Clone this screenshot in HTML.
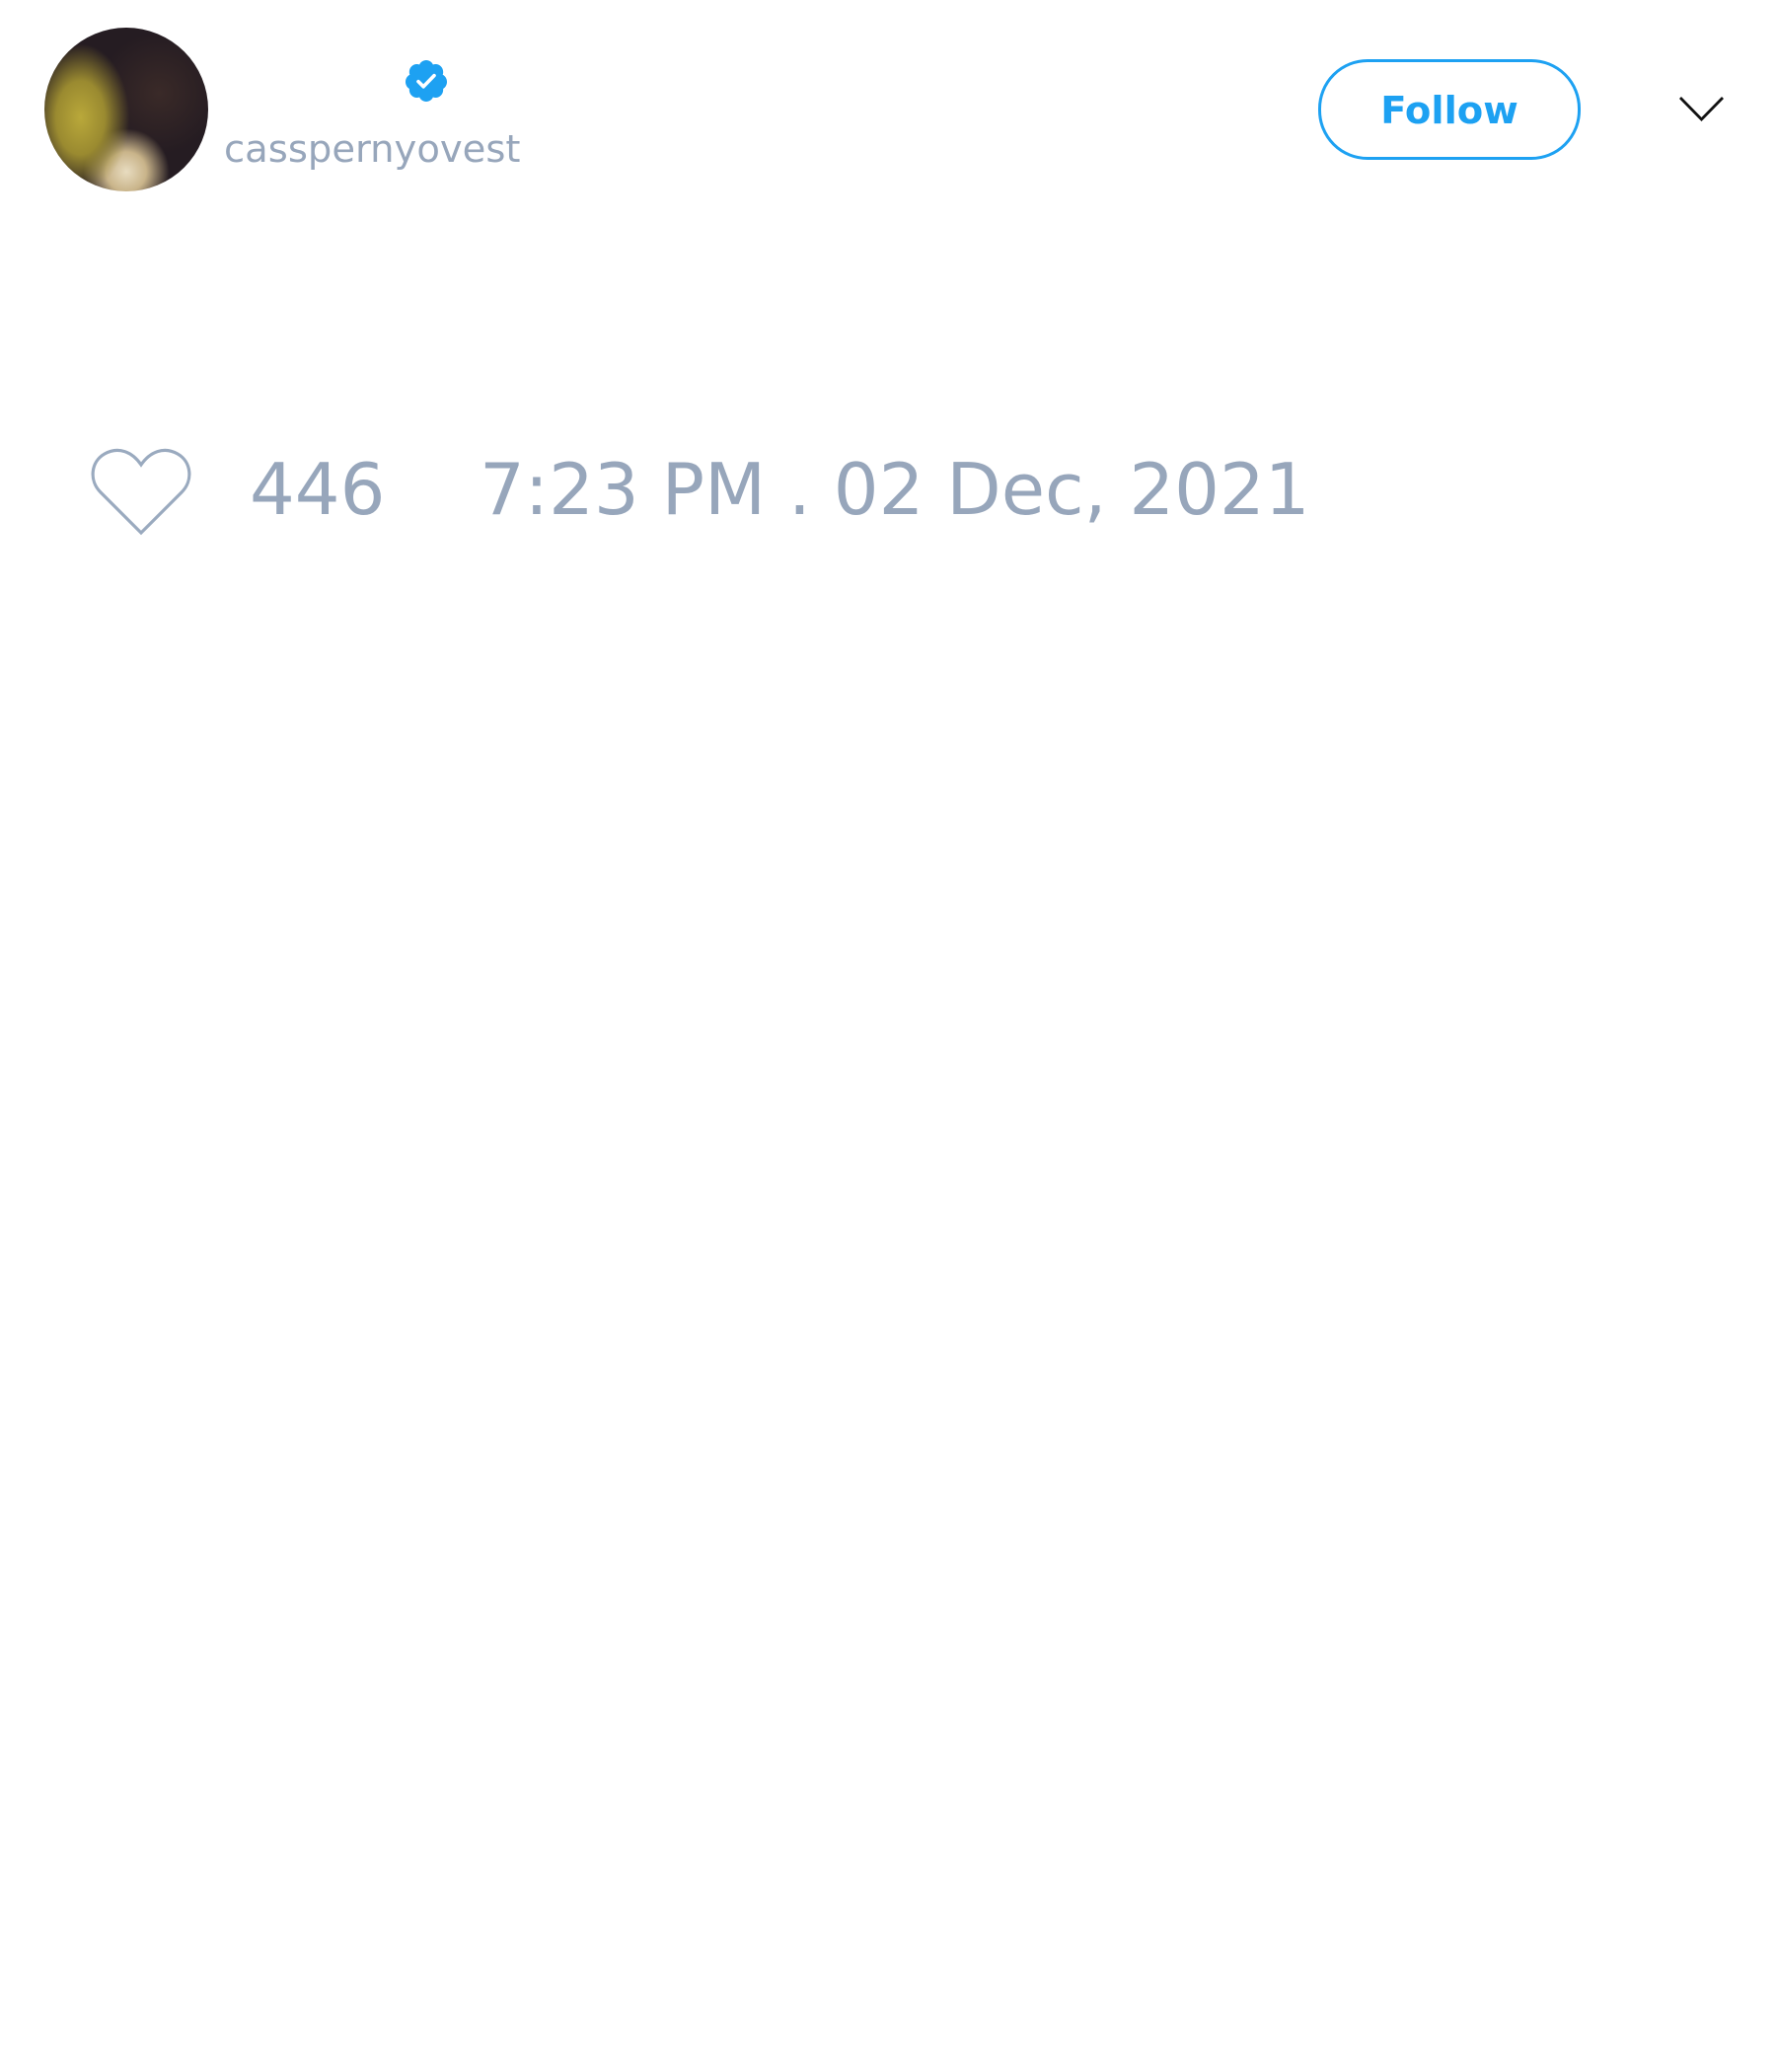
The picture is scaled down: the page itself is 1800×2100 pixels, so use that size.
<!DOCTYPE html>
<html><head><meta charset="utf-8"><style>
html,body{margin:0;padding:0;background:#fff;width:1800px;height:2100px;overflow:hidden;font-family:"DejaVu Sans","Liberation Sans",sans-serif}
.abs{position:absolute}
.av{left:45px;top:28px;width:166px;height:166px;border-radius:50%;background:radial-gradient(ellipse 30% 45% at 22% 55%,#b9a83a 0,#9a8a30 50%,transparent 100%),radial-gradient(circle at 50% 88%,#e8dcc0 0,#c9b48a 12%,transparent 26%),radial-gradient(circle at 70% 40%,#3a2a28 0,#251c22 40%),#2a2026;overflow:hidden}
.user{left:227px;top:133px;font-size:38.5px;color:#97a6bb;line-height:1;white-space:nowrap}
.btn{left:1336px;top:60px;width:260px;height:96px;border:3.2px solid #1da1f2;border-radius:50px}
.btn span{position:absolute;left:0;right:0;top:31px;text-align:center;font-weight:bold;font-size:38.5px;color:#1da1f2;line-height:1}
.stat{top:460px;font-size:72px;color:#97a6bb;line-height:1;white-space:nowrap}
</style></head><body>
<div class="abs av"></div>
<svg class="abs" style="left:408px;top:58px" width="48" height="48" viewBox="0 0 24 24"><path fill="#1da1f2" d="M22.5 12.5c0-1.58-.875-2.950-2.148-3.6.154-.435.238-.905.238-1.4 0-2.21-1.710-3.998-3.818-3.998-.47 0-.92.084-1.336.25C14.818 2.415 13.51 1.5 12 1.5s-2.816.917-3.437 2.250c-.415-.165-.866-.25-1.336-.25-2.110 0-3.818 1.790-3.818 4 0 .494.083.964.237 1.4-1.272.65-2.147 2.018-2.147 3.6 0 1.495.782 2.798 1.942 3.486-.02.17-.032.34-.032.514 0 2.210 1.708 4 3.818 4 .47 0 .92-.086 1.335-.25.62 1.334 1.926 2.25 3.437 2.25 1.512 0 2.818-.916 3.437-2.250.415.163.865.248 1.336.248 2.11 0 3.818-1.79 3.818-4 0-.174-.012-.344-.033-.513 1.158-.687 1.943-1.990 1.943-3.484z"/><path d="M8 12.3l2.6 2.6L16 9.3" fill="none" stroke="#fff" stroke-width="1.8" stroke-linecap="round" stroke-linejoin="round"/></svg>
<div class="abs user">casspernyovest</div>
<div class="abs btn"><span>Follow</span></div>
<svg class="abs" style="left:1700px;top:95px" width="50" height="32"><path d="M3 4 L24.5 26 L46 4" fill="none" stroke="#111" stroke-width="2.8"/></svg>
<svg class="abs" style="left:88px;top:450px" width="112" height="98" viewBox="0 0 112 98"><path d="M55 90 L14 49 C2 37 4 18 18 10 C32 2 46 8 55 21 C64 8 78 2 92 10 C106 18 108 37 96 49 Z" fill="none" stroke="#9aaabf" stroke-width="3.2" stroke-linejoin="miter"/></svg>
<div class="abs stat" style="left:253px">446</div>
<div class="abs stat" style="left:486px">7:23 PM . 02 Dec, 2021</div>
</body></html>
